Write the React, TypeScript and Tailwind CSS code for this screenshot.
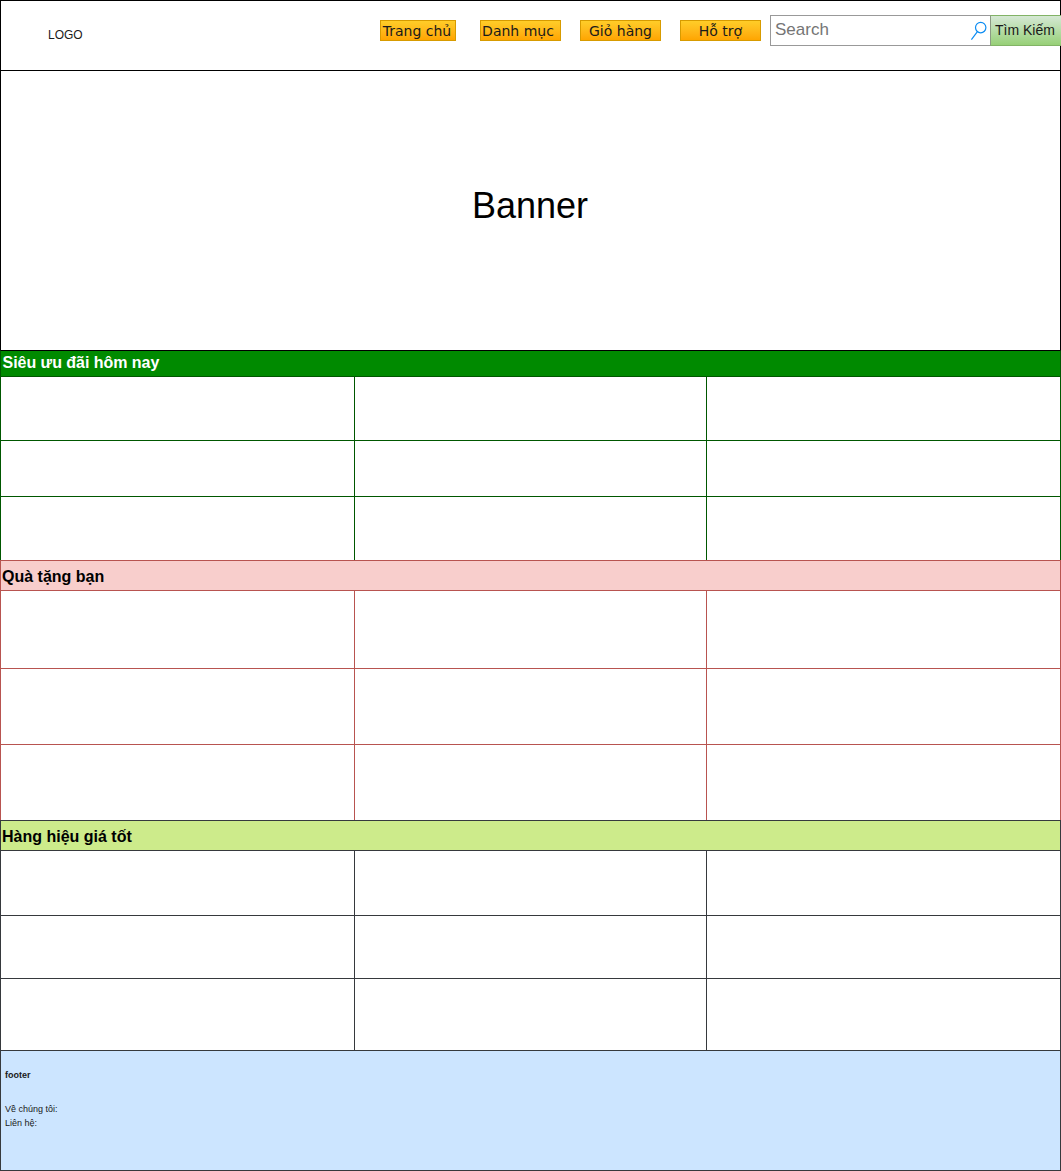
const navItems = [
  { label: 'Trang chủ', box: 'w-[76px] mr-[24px] pr-[2px]' },
  { label: 'Danh mục', box: 'w-[81px] mr-[19px] pr-[5px]' },
  { label: 'Giỏ hàng', box: 'w-[81px] mr-[19px]' },
  { label: 'Hỗ trợ', box: 'w-[81px] mr-[9px]' },
];

const sections = [
  {
    title: 'Siêu ưu đãi hôm nay',
    line: 'border-[#005700]',
    head: 'h-[26px] border-t-black bg-[#008a00] pl-[1.5px] pt-[2px] leading-[19px] tracking-[-0.03px] text-white',
    rows: ['h-[64px]', 'h-[56px]', 'h-[64px]'],
  },
  {
    title: 'Quà tặng bạn',
    line: 'border-[#b85450]',
    head: 'h-[30px] bg-[#f8cecc] pl-[1px] pt-[6px] leading-[19px] text-black',
    rows: ['h-[78px]', 'h-[76px]', 'h-[76px]'],
  },
  {
    title: 'Hàng hiệu giá tốt',
    line: 'border-[#36393d]',
    head: 'h-[30px] bg-[#cdeb8b] pl-[1px] pt-[6px] leading-[19px] text-black',
    rows: ['h-[65px]', 'h-[63px]', 'h-[72px]'],
  },
];

function Header() {
  return (
    <header className="flex h-[70px] border-x border-t border-black">
      <div className="w-[379px] shrink-0 pl-[47px] pt-[27px] text-[12px] leading-[14px] text-[#1a1a1a]">LOGO</div>
      <nav className="flex shrink-0 pt-[19px]">
        {navItems.map((item) => (
          <a
            key={item.label}
            className={`flex h-[21px] justify-center whitespace-nowrap border border-[#d79b00] bg-linear-to-b from-[#ffcd28] to-[#ffa500] pt-px font-['DejaVu_Sans',sans-serif] text-[14px] leading-[19px] text-[#1a1a1a] ${item.box}`}
          >
            {item.label}
          </a>
        ))}
      </nav>
      <form className="-mr-px flex shrink-0 pt-[14px]">
        <div className="flex h-[31px] w-[220px] justify-between border border-r-0 border-[#999999] pl-[4px] text-[17px] leading-[27px] text-[#757575]">
          <span>Search</span>
          <svg className="mr-[3px] mt-[5px]" width="17" height="20" viewBox="0 0 17 20" fill="none" stroke="#0c8cf2" strokeWidth="1.2">
            <circle cx="10.7" cy="6.6" r="5.2" />
            <path d="M7.4 10.7L1.4 18.6" />
          </svg>
        </div>
        <button
          type="button"
          className="h-[31px] w-[71px] whitespace-nowrap border-y border-l border-y-[#82b366] border-l-[#8c9a84] bg-linear-to-b from-[#d5e8d4] to-[#97d077] pl-[4px] text-left text-[14px] leading-[29px] text-[#1a1a1a]"
        >
          Tìm Kiếm
        </button>
      </form>
    </header>
  );
}

export default function App() {
  return (
    <div className="w-[1061px] overflow-hidden bg-white font-['Liberation_Sans',Arial,sans-serif] text-black">
      <Header />
      <div className="flex h-[280px] justify-center border-x border-t border-black pr-px pt-[114px] text-[36px] leading-[41px]">
        Banner
      </div>
      {sections.map((s) => (
        <section key={s.title}>
          <h2 className={`border-x border-t text-[16px] font-bold ${s.line} ${s.head}`}>{s.title}</h2>
          {s.rows.map((h, i) => (
            <div key={i} className={`grid grid-cols-[354px_352px_355px] border-t ${s.line} ${h}`}>
              <div className={`border-l ${s.line}`} />
              <div className={`border-l ${s.line}`} />
              <div className={`border-x ${s.line}`} />
            </div>
          ))}
        </section>
      ))}
      <footer className="h-[121px] border border-[#36393d] bg-[#cce5ff] pl-[4px] pt-[17px] text-[9px] leading-[14px] text-[#1a1a1a]">
        <h3 className="mb-[20px] font-bold">footer</h3>
        <p>Về chúng tôi:</p>
        <p>Liên hệ:</p>
      </footer>
    </div>
  );
}
